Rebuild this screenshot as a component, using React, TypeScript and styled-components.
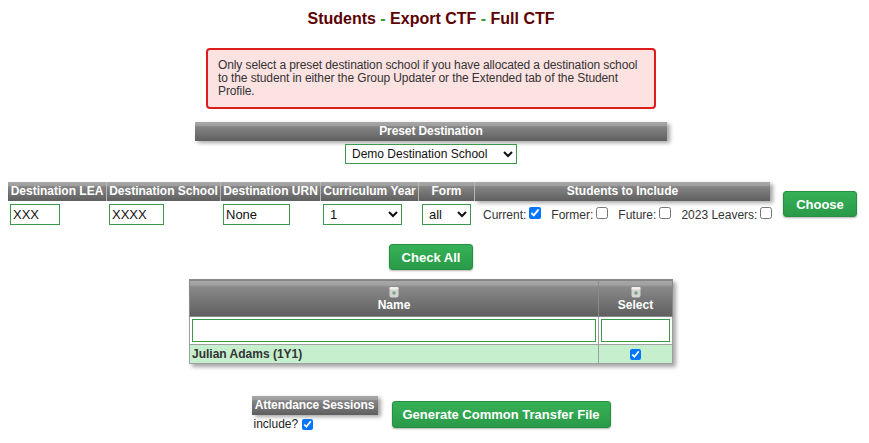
import React from "react";
import styled, { createGlobalStyle } from "styled-components";

const Global = createGlobalStyle`
  html, body { margin: 0; padding: 0; background: #fff; }
  body { font-family: "Liberation Sans", Arial, sans-serif; font-size: 12px; color: #222; }
  * { box-sizing: border-box; }
`;

const headerBg = `linear-gradient(to bottom, #a8a8a8 0%, #9c9c9c 22%, #858585 24%, #5f5f5f 100%)`;

const Page = styled.div`
  width: 869px;
  padding: 9px 7px 0 0;
  display: flex;
  flex-direction: column;
  align-items: center;
`;

const Title = styled.h1`
  margin: 0;
  font-size: 16px;
  font-weight: bold;
  color: #5c0000;
  line-height: 20px;
  span { color: #3a9a3a; }
`;

const Alert = styled.div`
  margin-top: 19px;
  width: 450px;
  height: 61px;
  border: 2px solid #dd1c1c;
  border-radius: 4px;
  background: #fde2e2;
  padding: 9px 14px 9px 10px;
  font-size: 12px;
  line-height: 13px;
  letter-spacing: -0.1px;
  color: #333;
`;

const PresetBlock = styled.div`
  margin-top: 13px;
  display: flex;
  flex-direction: column;
  align-items: center;
`;

const HeaderBar = styled.div<{ $w: number }>`
  width: ${(p) => p.$w}px;
  height: 19px;
  background: ${headerBg};
  color: #fff;
  font-weight: bold;
  font-size: 12px;
  line-height: 19px;
  text-align: center;
  white-space: nowrap;
  letter-spacing: -0.1px;
  box-shadow: 3px 2px 4px rgba(0, 0, 0, 0.35);
`;

const Select = styled.select<{ $w: number }>`
  width: ${(p) => p.$w}px;
  height: 20px;
  border: 1px solid #3a9a4a;
  border-radius: 0;
  background: #fff;
  font-family: "Liberation Sans", Arial, sans-serif;
  font-size: 12px;
  color: #111;
  padding: 0 2px;
  outline: none;
`;

const PresetSelect = styled(Select)`
  margin-top: 3px;
`;

const FilterRow = styled.div`
  align-self: flex-start;
  margin-top: 18px;
  margin-left: 8px;
  display: flex;
  align-items: flex-start;
  gap: 13px;
`;

const FilterTable = styled.div`
  display: grid;
  grid-template-columns: 98px 114px 100px 98px 56px 296px;
  grid-template-rows: 19px auto;
  row-gap: 3px;
`;

const HeadCell = styled.div<{ $first?: boolean; $last?: boolean }>`
  background: ${headerBg};
  color: #fff;
  font-weight: bold;
  font-size: 12px;
  line-height: 19px;
  text-align: center;
  white-space: nowrap;
  border-left: ${(p) => (p.$first ? "none" : "1px solid #b8b8b8")};
  box-shadow: ${(p) => (p.$last ? "3px 2px 4px rgba(0,0,0,0.35)" : "none")};
`;

const Cell = styled.div<{ $pl?: number }>`
  padding-left: ${(p) => p.$pl ?? 2}px;
  display: flex;
  align-items: center;
  height: 21px;
`;

const TextInput = styled.input<{ $w: number }>`
  width: ${(p) => p.$w}px;
  height: 21px;
  border: 1px solid #3a9a4a;
  padding: 0 2px;
  font-family: "Liberation Sans", Arial, sans-serif;
  font-size: 13px;
  color: #111;
  outline: none;
`;

const FormSelect = styled(Select)`
  height: 21px;
  font-size: 13px;
`;

const IncludeCell = styled.div`
  display: flex;
  align-items: center;
  height: 21px;
  padding-left: 9px;
  gap: 10px;
  font-size: 12px;
  color: #333;
  white-space: nowrap;
`;

const CheckLabel = styled.label`
  display: flex;
  align-items: center;
  white-space: nowrap;
  input { margin: 0 0 4px 3px; width: 12px; height: 12px; }
`;

const GreenButton = styled.button<{ $w: number; $h?: number }>`
  width: ${(p) => p.$w}px;
  height: ${(p) => p.$h ?? 26}px;
  border: 1px solid #25903f;
  border-radius: 3px;
  background: linear-gradient(to bottom, #36b157 0%, #2a9a48 100%);
  color: #fff;
  font-family: "Liberation Sans", Arial, sans-serif;
  font-weight: bold;
  font-size: 13px;
  box-shadow: 0 1px 2px rgba(0, 0, 0, 0.3);
  padding: 0;
  white-space: nowrap;
  cursor: pointer;
`;

const ChooseButton = styled(GreenButton)`
  margin-top: 9px;
`;

const CheckAllButton = styled(GreenButton)`
  margin-top: 19px;
`;

const StudentTable = styled.table`
  margin-top: 9px;
  width: 484px;
  border-collapse: collapse;
  border: 1px solid #8a8a8a;
  box-shadow: 3px 3px 4px rgba(0, 0, 0, 0.35);
`;

const Th = styled.th<{ $w?: number }>`
  ${(p) => (p.$w ? `width: ${p.$w}px;` : "")}
  height: 37px;
  padding: 0;
  background: linear-gradient(to bottom, #a8a8a8 0%, #a0a0a0 14%, #8a8a8a 16%, #5f5f5f 100%);
  color: #fff;
  font-size: 12px;
  font-weight: bold;
  border: 1px solid #8a8a8a;
  vertical-align: top;
`;

const ThInner = styled.div`
  display: flex;
  flex-direction: column;
  align-items: center;
  padding-top: 6px;
  gap: 0;
  line-height: 15px;
`;

const FilterTd = styled.td`
  height: 27px;
  padding: 2px;
  border: 1px solid #a0a0a0;
  background: #fff;
`;

const FilterInput = styled.input`
  width: 100%;
  height: 23px;
  border: 1px solid #3a9a4a;
  outline: none;
  display: block;
`;

const DataTd = styled.td<{ $center?: boolean }>`
  height: 19px;
  padding: 0 2px;
  border: 1px solid #a0a0a0;
  background: #c6efce;
  font-weight: bold;
  font-size: 12px;
  color: #333;
  text-align: ${(p) => (p.$center ? "center" : "left")};
  input { margin: 0; width: 11px; height: 11px; vertical-align: middle; }
`;

const BottomRow = styled.div`
  margin-top: 32px;
  display: flex;
  align-items: flex-start;
  gap: 14px;
`;

const Attendance = styled.div`
  display: flex;
  flex-direction: column;
`;

const IncludeLine = styled.label`
  display: flex;
  align-items: center;
  margin-top: 2px;
  padding-left: 2px;
  font-size: 12px;
  color: #222;
  input { margin: 0 0 0 4px; width: 11px; height: 11px; }
`;

const GenerateButton = styled(GreenButton)`
  margin-top: 5px;
`;

const SortIcon = () => (
  <svg width="10" height="12" viewBox="0 0 10 12">
    <rect x="0.5" y="1" width="9" height="10.5" rx="2" fill="#d4d4d4" />
    <rect x="0.5" y="1" width="9" height="2.5" rx="1" fill="#efefef" />
    <circle cx="5" cy="7" r="1.8" fill="#79a879" />
  </svg>
);

export default function App() {
  return (
    <>
      <Global />
      <Page>
        <Title>
          Students <span>-</span> Export CTF <span>-</span> Full CTF
        </Title>
        <Alert>
          Only select a preset destination school if you have allocated a destination school to
          the student in either the Group Updater or the Extended tab of the Student Profile.
        </Alert>
        <PresetBlock>
          <HeaderBar $w={472}>Preset Destination</HeaderBar>
          <PresetSelect $w={172} defaultValue="demo">
            <option value="demo">Demo Destination School</option>
          </PresetSelect>
        </PresetBlock>
        <FilterRow>
          <FilterTable>
            <HeadCell $first>Destination LEA</HeadCell>
            <HeadCell>Destination School</HeadCell>
            <HeadCell>Destination URN</HeadCell>
            <HeadCell>Curriculum Year</HeadCell>
            <HeadCell>Form</HeadCell>
            <HeadCell $last>Students to Include</HeadCell>
            <Cell>
              <TextInput $w={50} defaultValue="XXX" />
            </Cell>
            <Cell $pl={3}>
              <TextInput $w={55} defaultValue="XXXX" />
            </Cell>
            <Cell $pl={3}>
              <TextInput $w={67} defaultValue="None" />
            </Cell>
            <Cell $pl={3}>
              <FormSelect $w={79} defaultValue="1">
                <option value="1">1</option>
              </FormSelect>
            </Cell>
            <Cell $pl={4}>
              <FormSelect $w={49} defaultValue="all">
                <option value="all">all</option>
              </FormSelect>
            </Cell>
            <IncludeCell>
              <CheckLabel>
                Current: <input type="checkbox" defaultChecked />
              </CheckLabel>
              <CheckLabel>
                Former: <input type="checkbox" />
              </CheckLabel>
              <CheckLabel>
                Future: <input type="checkbox" />
              </CheckLabel>
              <CheckLabel>
                2023 Leavers: <input type="checkbox" />
              </CheckLabel>
            </IncludeCell>
          </FilterTable>
          <ChooseButton $w={74}>Choose</ChooseButton>
        </FilterRow>
        <CheckAllButton $w={84}>Check All</CheckAllButton>
        <StudentTable>
          <thead>
            <tr>
              <Th>
                <ThInner>
                  <SortIcon />
                  Name
                </ThInner>
              </Th>
              <Th $w={74}>
                <ThInner>
                  <SortIcon />
                  Select
                </ThInner>
              </Th>
            </tr>
          </thead>
          <tbody>
            <tr>
              <FilterTd>
                <FilterInput />
              </FilterTd>
              <FilterTd>
                <FilterInput />
              </FilterTd>
            </tr>
            <tr>
              <DataTd>Julian Adams (1Y1)</DataTd>
              <DataTd $center>
                <input type="checkbox" defaultChecked />
              </DataTd>
            </tr>
          </tbody>
        </StudentTable>
        <BottomRow>
          <Attendance>
            <HeaderBar $w={126}>Attendance Sessions</HeaderBar>
            <IncludeLine>
              include? <input type="checkbox" defaultChecked />
            </IncludeLine>
          </Attendance>
          <GenerateButton $w={219} $h={27}>
            Generate Common Transfer File
          </GenerateButton>
        </BottomRow>
      </Page>
    </>
  );
}
